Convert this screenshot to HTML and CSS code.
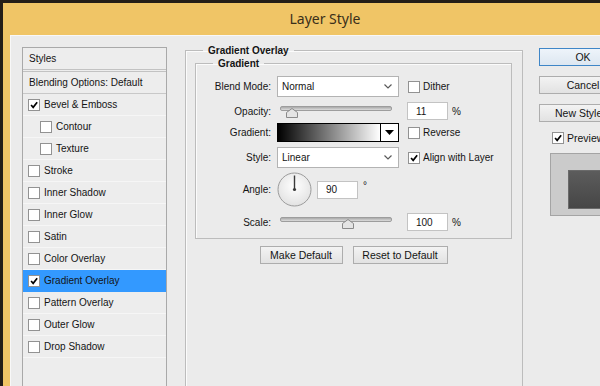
FILE: index.html
```html
<!DOCTYPE html>
<html lang="en">
<head>
  <meta charset="UTF-8">
  <meta name="viewport" content="width=device-width, initial-scale=1.0">
  <title>Layer Style</title>

  <link rel="stylesheet" href="styles.css">
</head>
<body>
  <div class="window">
    <div class="titlebar">Layer Style</div>

    <div class="client">
      <!-- list of effects -->
      <div class="styles_panel">
        <div class="panel_head">Styles</div>
        <div class="panel_blend">Blending Options: Default</div>
        <div class="item"><span class="cb"><svg viewBox="0 0 12 12"><polyline points="2.5,6 5,8.8 9.8,2.6"/></svg></span>Bevel &amp; Emboss</div>
        <div class="item sub"><span class="cb"></span>Contour</div>
        <div class="item sub"><span class="cb"></span>Texture</div>
        <div class="item"><span class="cb"></span>Stroke</div>
        <div class="item"><span class="cb"></span>Inner Shadow</div>
        <div class="item"><span class="cb"></span>Inner Glow</div>
        <div class="item"><span class="cb"></span>Satin</div>
        <div class="item"><span class="cb"></span>Color Overlay</div>
        <div class="item selected"><span class="cb"><svg viewBox="0 0 12 12"><polyline points="2.5,6 5,8.8 9.8,2.6"/></svg></span>Gradient Overlay</div>
        <div class="item"><span class="cb"></span>Pattern Overlay</div>
        <div class="item"><span class="cb"></span>Outer Glow</div>
        <div class="item"><span class="cb"></span>Drop Shadow</div>
      </div>

      <!-- settings -->
      <div class="middle">
        <fieldset class="group outer">
          <legend>Gradient Overlay</legend>

          <fieldset class="group inner">
            <legend>Gradient</legend>

            <div class="row r_blend">
              <span class="name">Blend Mode:</span>
              <div class="select">
                <span>Normal</span>
                <svg class="chev" viewBox="0 0 8 5"><polyline points="0.5,0.5 4,4 7.5,0.5"/></svg>
              </div>
              <label class="extra"><span class="cb"></span>Dither</label>
            </div>

            <div class="row r_opacity">
              <span class="name">Opacity:</span>
              <div class="slider">
                <div class="track"></div>
                <svg class="thumb" style="left: 11%" viewBox="0 0 12 10"><path d="M6 0.5 L11.5 4.5 L11.5 9.5 L0.5 9.5 L0.5 4.5 Z"/></svg>
              </div>
              <input class="num extra" type="text" value="11"><span class="unit">%</span>
            </div>

            <div class="row r_gradient">
              <span class="name">Gradient:</span>
              <div class="gradient_pick">
                <div class="ramp"></div>
                <div class="drop"><svg viewBox="0 0 9 5"><path d="M0 0 H9 L4.5 5 Z"/></svg></div>
              </div>
              <label class="extra"><span class="cb"></span>Reverse</label>
            </div>

            <div class="row r_style">
              <span class="name">Style:</span>
              <div class="select">
                <span>Linear</span>
                <svg class="chev" viewBox="0 0 8 5"><polyline points="0.5,0.5 4,4 7.5,0.5"/></svg>
              </div>
              <label class="extra"><span class="cb"><svg viewBox="0 0 12 12"><polyline points="2.5,6 5,8.8 9.8,2.6"/></svg></span>Align with Layer</label>
            </div>

            <div class="row r_angle">
              <span class="name">Angle:</span>
              <svg class="dial" viewBox="0 0 35 35">
                <defs>
                  <radialGradient id="dialfill" cx="50%" cy="40%" r="60%">
                    <stop offset="0" stop-color="#ffffff"/>
                    <stop offset="1" stop-color="#e2e2e2"/>
                  </radialGradient>
                </defs>
                <circle cx="17.5" cy="17.5" r="16.5" fill="url(#dialfill)" stroke="#9b9b9b"/>
                <line x1="17.5" y1="17.5" x2="17.5" y2="3.5" stroke="#3a3a3a" stroke-width="1.4"/>
                <circle cx="17.5" cy="17.5" r="1.6" fill="#3a3a3a"/>
              </svg>
              <input class="num angle" type="text" value="90"><span class="deg">°</span>
            </div>

            <div class="row r_scale">
              <span class="name">Scale:</span>
              <div class="slider">
                <div class="track"></div>
                <svg class="thumb" style="left: 61%" viewBox="0 0 12 10"><path d="M6 0.5 L11.5 4.5 L11.5 9.5 L0.5 9.5 L0.5 4.5 Z"/></svg>
              </div>
              <input class="num extra" type="text" value="100"><span class="unit">%</span>
            </div>
          </fieldset>

          <div class="defaults">
            <button class="btn make">Make Default</button>
            <button class="btn reset">Reset to Default</button>
          </div>
        </fieldset>
      </div>

      <!-- dialog buttons -->
      <div class="actions">
        <button class="btn wide ok">OK</button>
        <button class="btn wide">Cancel</button>
        <button class="btn wide">New Style...</button>
        <label class="preview_check"><span class="cb"><svg viewBox="0 0 12 12"><polyline points="2.5,6 5,8.8 9.8,2.6"/></svg></span>Preview</label>
        <div class="preview_box">
          <div class="swatch"></div>
        </div>
      </div>
    </div>
  </div>
</body>
</html>
```

FILE: styles.css
```css
* {
  box-sizing: border-box;
}

body {
  margin: 0;
  padding: 3px 0 0 3px;
  background: #241e17;
  overflow: hidden;
  height: 386px;
  font-family: "Liberation Sans", Arial, sans-serif;
  font-size: 10px;
  color: #141414;
}

.window {
  width: 644px;
  height: 400px;
  background: #f0c566;
}

.titlebar {
  height: 32px;
  line-height: 31px;
  text-align: center;
  font-family: "Noto Sans", "Liberation Sans", sans-serif;
  font-size: 14px;
  color: #3a2f1a;
}

.client {
  display: flex;
  align-items: flex-start;
  height: 370px;
  margin-left: 7px;
  padding: 11px 0 0 11px;
  background: #ebebeb;
  border-top: 1px solid #f8f8f8;
  border-left: 1px solid #f8f8f8;
}

/* styles list */
.styles_panel {
  width: 145px;
  height: 360px;
  flex-shrink: 0;
  border: 1px solid #a9a9a9;
  background: #ededed;
}

.panel_head {
  height: 24px;
  padding-left: 6px;
  line-height: 21px;
  border-bottom: 3px double #c2c2c2;
}

.panel_blend {
  height: 22px;
  padding-left: 6px;
  line-height: 22px;
  border-bottom: 1px solid #c8c8c8;
}

.item {
  display: flex;
  align-items: center;
  height: 22px;
  padding-left: 5px;
  border-bottom: 1px solid #f6f6f6;
}

.item.sub {
  padding-left: 17px;
}

.item.selected {
  background: #3399ff;
  border-bottom-color: #3399ff;
}

.item .cb {
  margin-right: 4px;
}

/* checkbox */
.cb {
  display: inline-flex;
  width: 12px;
  height: 12px;
  flex-shrink: 0;
  border: 1px solid #929292;
  background: #fff;
}

.cb svg {
  width: 10px;
  height: 10px;
  fill: none;
  stroke: #000;
  stroke-width: 2;
}

/* settings groups */
.middle {
  margin: -3px 0 0 18px;
}

.group {
  margin: 0;
  border: 1px solid #bcbcbc;
  box-shadow: 1px 1px 0 #fbfbfb inset;
}

.group legend {
  padding: 0 5px;
  line-height: 13px;
  font-weight: bold;
}

.outer {
  width: 338px;
  height: 360px;
  padding: 0 10px 0 9px;
  border-bottom: none;
}

.outer > legend {
  margin-left: 8px;
}

.inner {
  width: 317px;
  padding: 6px 0 7px 0;
}

.inner > legend {
  margin-left: 17px;
}

.row {
  display: flex;
  align-items: center;
}

.r_blend { height: 21px; }
.r_opacity { height: 18px; margin-top: 5px; }
.r_gradient { height: 19px; margin-top: 3px; }
.r_style { height: 21px; margin-top: 5px; }
.r_angle { height: 35px; margin-top: 4px; }
.r_scale { height: 18px; margin-top: 6px; }

.name {
  width: 75px;
  margin-right: 6px;
  text-align: right;
}

.select {
  display: flex;
  align-items: center;
  justify-content: space-between;
  width: 122px;
  height: 21px;
  padding: 0 6px 0 4px;
  background: #fff;
  border: 1px solid #b3b3b3;
}

.chev {
  width: 8px;
  height: 5px;
  fill: none;
  stroke: #5a5a5a;
  stroke-width: 1.2;
}

.extra {
  margin-left: 8px;
}

label.extra {
  display: flex;
  align-items: center;
  margin-left: 9px;
}

label.extra .cb {
  margin-right: 3px;
}

.slider {
  position: relative;
  width: 112px;
  height: 18px;
  margin: 0 7px 0 3px;
}

.track {
  margin-top: 4px;
  height: 5px;
  border: 1px solid #9d9d9d;
  border-radius: 2px;
  background: linear-gradient(#a9a9a9, #dcdcdc);
}

.thumb {
  position: absolute;
  top: 6px;
  width: 12px;
  height: 10px;
  margin-left: -6px;
  fill: #e4e4e4;
  stroke: #8a8a8a;
}

.num {
  width: 41px;
  height: 18px;
  padding: 0 0 0 8px;
  border: 1px solid #c3c3c3;
  background: #fff;
  font: inherit;
  color: #141414;
}

.unit {
  margin-left: 4px;
}

.gradient_pick {
  display: flex;
  width: 122px;
  height: 19px;
  border: 1px solid #000;
}

.ramp {
  flex: 1;
  background: linear-gradient(to right, #000, #fff);
}

.drop {
  display: flex;
  align-items: center;
  justify-content: center;
  width: 18px;
  border-left: 1px solid #000;
  background: #fff;
}

.drop svg {
  width: 9px;
  height: 5px;
  fill: #000;
}

.dial {
  width: 35px;
  height: 35px;
}

.num.angle {
  margin-left: 5px;
}

.deg {
  margin: -8px 0 0 5px;
}

.defaults {
  display: flex;
  justify-content: center;
  gap: 10px;
  margin-top: 7px;
}

.btn {
  height: 18px;
  padding: 0;
  border: 1px solid #adadad;
  background: linear-gradient(#f3f3f3, #e2e2e2);
  font: inherit;
  font-size: 10.5px;
  color: #141414;
}

.make { width: 83px; }
.reset { width: 95px; }

/* right side */
.actions {
  display: flex;
  flex-direction: column;
  width: 100px;
  margin: 1px 0 0 16px;
}

.btn.wide {
  width: 88px;
  margin-bottom: 10px;
}

.btn.ok {
  border-color: #3f86c7;
  background: linear-gradient(#eef4fa, #dde7f1);
}

.preview_check {
  display: flex;
  align-items: center;
  margin: 0 0 9px 13px;
  font-size: 10.5px;
}

.preview_check .cb {
  margin-right: 3px;
}

.preview_box {
  width: 80px;
  height: 63px;
  margin-left: 11px;
  padding: 16px 0 0 17px;
  border: 1px solid #a4a4a4;
  background: #cbcbcb;
}

.swatch {
  width: 40px;
  height: 39px;
  border: 1px solid #6a6a6a;
  background: linear-gradient(#5c5c5c, #464646);
}
```
